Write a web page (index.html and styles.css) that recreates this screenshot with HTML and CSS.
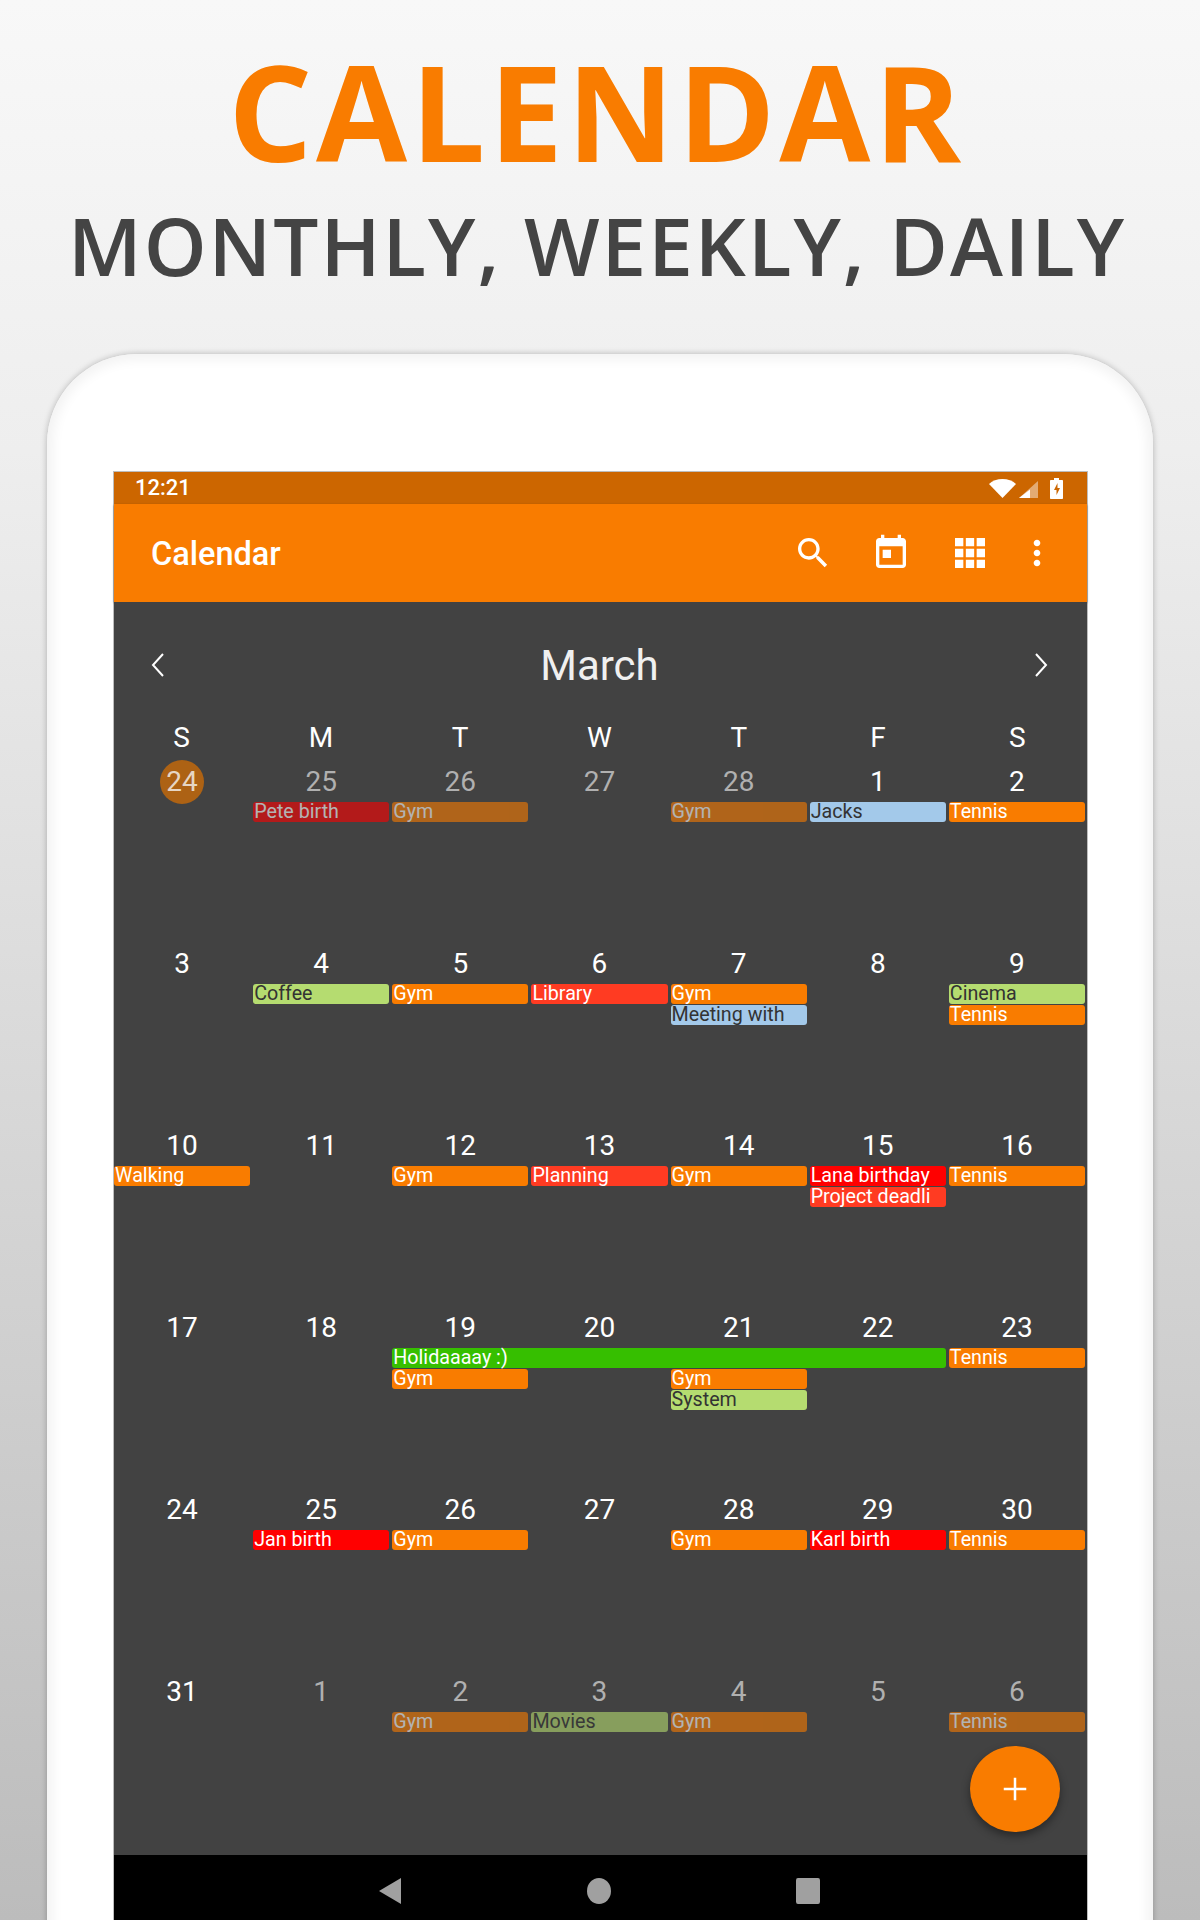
FILE: index.html
```html
<!DOCTYPE html>
<html lang="en">
<head>
    <meta charset="UTF-8">
    <meta name="viewport" content="width=device-width, initial-scale=1.0">
    <title>Calendar</title>
    <link rel="stylesheet" href="styles.css">
</head>
<body>
    <header class="promo">
        <h1>CALENDAR</h1>
        <h2>MONTHLY, WEEKLY, DAILY</h2>
    </header>

    <div class="phone">
        <div class="screen">
            <div class="status-bar">
                <span class="time">12:21</span>
                <div class="status-icons">
                    <svg class="wifi" viewBox="0 0 27 19"><path fill="#fff" d="M13.5 19 0 5C3.5 1.800 8.200 0 13.500 0S23.500 1.800 27 5z"/></svg>
                    <svg class="signal" viewBox="0 0 19 17"><path fill="#fff" fill-opacity=".45" d="M19 0v17H0z"/><path fill="#fff" d="M11 8.500V17H0z"/></svg>
                    <svg class="battery" viewBox="0 0 13 21"><path fill="#fff" d="M4 0h5v2h3c.6 0 1 .4 1 1v17c0 .6-.4 1-1 1H1c-.6 0-1-.4-1-1V3c0-.6.400-1 1-1h3z"/><path fill="#cc6600" d="M7.500 5 4 12h2.500v5L10 10H7.500z"/></svg>
                </div>
            </div>

            <div class="toolbar">
                <span class="app-title">Calendar</span>
                <svg class="tool tool-search" viewBox="0 0 24 24"><path d="M15.500 14h-.79l-.28-.27C15.410 12.590 16 11.110 16 9.500 16 5.910 13.090 3 9.500 3S3 5.910 3 9.500 5.910 16 9.500 16c1.610 0 3.090-.59 4.230-1.570l.27.28v.79l5 4.990L20.490 19l-4.990-5zm-6 0C7.010 14 5 11.990 5 9.500S7.010 5 9.500 5 14 7.010 14 9.500 11.990 14 9.500 14z"/></svg>
                <svg class="tool tool-today" viewBox="0 0 24 24"><path d="M19 3h-1V1h-2v2H8V1H6v2H5c-1.110 0-1.990.9-1.990 2L3 19c0 1.100.89 2 2 2h14c1.100 0 2-.9 2-2V5c0-1.100-.9-2-2-2zm0 16H5V8h14v11zM7 10h5v5H7z"/></svg>
                <svg class="tool tool-grid" viewBox="0 0 24 24"><path d="M3 3h5v5H3zM9.500 3h5v5h-5zM16 3h5v5h-5zM3 9.500h5v5H3zM9.500 9.500h5v5h-5zM16 9.500h5v5h-5zM3 16h5v5H3zM9.500 16h5v5h-5zM16 16h5v5h-5z"/></svg>
                <svg class="tool tool-more" viewBox="0 0 24 24"><path d="M12 8c1.100 0 2-.9 2-2s-.9-2-2-2-2 .9-2 2 .9 2 2 2zm0 2c-1.100 0-2 .9-2 2s.9 2 2 2 2-.9 2-2-.9-2-2-2zm0 6c-1.100 0-2 .9-2 2s.9 2 2 2 2-.9 2-2-.9-2-2-2z"/></svg>
            </div>

            <main class="month">
                <div class="month-nav">
                    <svg class="chevron" viewBox="0 0 16 26"><path d="M13 2 3 13l10 11"/></svg>
                    <span class="month-name">March</span>
                    <svg class="chevron" viewBox="0 0 16 26"><path d="M3 2l10 11L3 24"/></svg>
                </div>

                <div class="weekdays">
                    <span>S</span><span>M</span><span>T</span><span>W</span><span>T</span><span>F</span><span>S</span>
                </div>

                <div class="week">
                    <span class="date c1"><span class="today">24</span></span>
                    <span class="date c2 dim">25</span>
                    <span class="date c3 dim">26</span>
                    <span class="date c4 dim">27</span>
                    <span class="date c5 dim">28</span>
                    <span class="date c6">1</span>
                    <span class="date c7">2</span>
                    <span class="ev c2 r1 red faded">Pete birth</span>
                    <span class="ev c3 r1 orange faded">Gym</span>
                    <span class="ev c5 r1 orange faded">Gym</span>
                    <span class="ev c6 r1 blue">Jacks</span>
                    <span class="ev c7 r1 orange">Tennis</span>
                </div>

                <div class="week">
                    <span class="date c1">3</span>
                    <span class="date c2">4</span>
                    <span class="date c3">5</span>
                    <span class="date c4">6</span>
                    <span class="date c5">7</span>
                    <span class="date c6">8</span>
                    <span class="date c7">9</span>
                    <span class="ev c2 r1 lime">Coffee</span>
                    <span class="ev c3 r1 orange">Gym</span>
                    <span class="ev c4 r1 tomato">Library</span>
                    <span class="ev c5 r1 orange">Gym</span>
                    <span class="ev c5 r2 blue">Meeting with</span>
                    <span class="ev c7 r1 lime">Cinema</span>
                    <span class="ev c7 r2 orange">Tennis</span>
                </div>

                <div class="week">
                    <span class="date c1">10</span>
                    <span class="date c2">11</span>
                    <span class="date c3">12</span>
                    <span class="date c4">13</span>
                    <span class="date c5">14</span>
                    <span class="date c6">15</span>
                    <span class="date c7">16</span>
                    <span class="ev c1 r1 orange">Walking</span>
                    <span class="ev c3 r1 orange">Gym</span>
                    <span class="ev c4 r1 tomato">Planning</span>
                    <span class="ev c5 r1 orange">Gym</span>
                    <span class="ev c6 r1 red">Lana birthday</span>
                    <span class="ev c6 r2 tomato">Project deadli</span>
                    <span class="ev c7 r1 orange">Tennis</span>
                </div>

                <div class="week">
                    <span class="date c1">17</span>
                    <span class="date c2">18</span>
                    <span class="date c3">19</span>
                    <span class="date c4">20</span>
                    <span class="date c5">21</span>
                    <span class="date c6">22</span>
                    <span class="date c7">23</span>
                    <span class="ev c3 span4 r1 green">Holidaaaay :)</span>
                    <span class="ev c7 r1 orange">Tennis</span>
                    <span class="ev c3 r2 orange">Gym</span>
                    <span class="ev c5 r2 orange">Gym</span>
                    <span class="ev c5 r3 lime">System</span>
                </div>

                <div class="week">
                    <span class="date c1">24</span>
                    <span class="date c2">25</span>
                    <span class="date c3">26</span>
                    <span class="date c4">27</span>
                    <span class="date c5">28</span>
                    <span class="date c6">29</span>
                    <span class="date c7">30</span>
                    <span class="ev c2 r1 red">Jan birth</span>
                    <span class="ev c3 r1 orange">Gym</span>
                    <span class="ev c5 r1 orange">Gym</span>
                    <span class="ev c6 r1 red">Karl birth</span>
                    <span class="ev c7 r1 orange">Tennis</span>
                </div>

                <div class="week">
                    <span class="date c1">31</span>
                    <span class="date c2 dim">1</span>
                    <span class="date c3 dim">2</span>
                    <span class="date c4 dim">3</span>
                    <span class="date c5 dim">4</span>
                    <span class="date c6 dim">5</span>
                    <span class="date c7 dim">6</span>
                    <span class="ev c3 r1 orange faded">Gym</span>
                    <span class="ev c4 r1 lime faded">Movies</span>
                    <span class="ev c5 r1 orange faded">Gym</span>
                    <span class="ev c7 r1 orange faded">Tennis</span>
                </div>

                <button class="fab" type="button">
                    <svg viewBox="0 0 24 24"><path d="M11 3h2v8h8v2h-8v8h-2v-8H3v-2h8z"/></svg>
                </button>
            </main>

            <nav class="nav-bar">
                <svg class="nav-icon" viewBox="0 0 24 24" preserveAspectRatio="none"><path d="M23 0v24L1 12z"/></svg>
                <svg class="nav-icon" viewBox="0 0 24 24" preserveAspectRatio="none"><circle cx="12" cy="12" r="12"/></svg>
                <svg class="nav-icon" viewBox="0 0 24 24" preserveAspectRatio="none"><rect x="0" y="0" width="24" height="24" rx="2"/></svg>
            </nav>
        </div>
    </div>
</body>
</html>
```

FILE: styles.css
```css
*{
    margin: 0;
    padding: 0;
    box-sizing: border-box;
}
body{
    width: 1200px;
    height: 1920px;
    overflow: hidden;
    background: linear-gradient(#f8f8f8 0, #eeeeee 450px, #bcbcbc 100%);
    font-family: Roboto, "Liberation Sans", sans-serif;
}

/* promo text */
.promo{
    height: 354px;
    padding-top: 33px;
    text-align: center;
    font-family: "Open Sans", "Liberation Sans", sans-serif;
}
.promo h1{
    color: #f97c00;
    font-size: 132px;
    font-weight: 700;
    letter-spacing: 3.7px;
    line-height: 156px;
    padding-right: 7px;
}
.promo h2{
    color: #444444;
    font-size: 80px;
    font-weight: 600;
    letter-spacing: 2px;
    line-height: 90px;
    margin-top: 11px;
    padding-right: 6px;
}

/* phone */
.phone{
    width: 1106px;
    height: 1640px;
    margin-left: 47px;
    padding: 117px 65px 0 66px;
    background: #ffffff;
    border-radius: 90px 90px 0 0;
    box-shadow: 0 0 6px rgba(0, 0, 0, .25), inset 0 0 12px 6px #f3f3f3;
}
.screen{
    width: 975px;
    border: 1px solid #bdbdbd;
    border-bottom: 0;
}

.status-bar{
    height: 32px;
    background-color: #cc6600;
    color: #ffffff;
    display: flex;
    align-items: center;
    justify-content: space-between;
    padding: 0 24px 0 21px;
}
.time{
    font-size: 22px;
    font-weight: 500;
    margin-top: -2px;
}
.status-icons{
    display: flex;
    align-items: center;
}
.wifi{
    width: 27px;
    height: 19px;
}
.signal{
    width: 19px;
    height: 17px;
    margin-left: 3px;
    margin-top: 2px;
}
.battery{
    width: 13px;
    height: 21px;
    margin-left: 12px;
}

.toolbar{
    height: 98px;
    background-color: #f97c00;
    display: flex;
    align-items: center;
    padding: 0 30px 0 37px;
    box-shadow: 0 1px 2px rgba(0, 0, 0, .5);
    position: relative;
}
.app-title{
    color: #ffffff;
    font-size: 32.5px;
    font-weight: 500;
    margin-right: auto;
    margin-top: 2px;
}
.tool{
    width: 40px;
    height: 40px;
    fill: #ffffff;
}
.tool-today{
    margin-left: 38px;
}
.tool-grid{
    margin-left: 39px;
}
.tool-more{
    margin-left: 27px;
}

/* month */
.month{
    height: 1253px;
    background-color: #424242;
    position: relative;
}
.month-nav{
    height: 98px;
    padding: 30px 38px 0 36px;
    display: flex;
    justify-content: space-between;
}
.month-name{
    color: #f0f0f0;
    font-size: 42px;
    line-height: 68px;
}
.chevron{
    width: 16px;
    height: 26px;
    margin-top: 20px;
    fill: none;
    stroke: #ffffff;
    stroke-width: 2;
}
.weekdays{
    height: 64px;
    margin-left: -2px;
    padding-top: 12px;
    display: grid;
    grid-template-columns: repeat(7, 1fr);
    text-align: center;
    color: #ffffff;
    font-size: 28px;
    line-height: 52px;
}
.week{
    height: 182px;
    margin-left: -1px;
    display: grid;
    grid-template-columns: repeat(7, 1fr);
    grid-template-rows: 38px repeat(3, 21px);
    align-content: start;
}
.date{
    grid-row: 1;
    padding-right: 1px;
    color: #ffffff;
    font-size: 28px;
    line-height: 36px;
    text-align: center;
}
.dim{
    color: #b0b0b0;
}
.today{
    display: block;
    width: 44px;
    height: 44px;
    margin: -4px auto 0;
    line-height: 44px;
    border-radius: 50%;
    background-color: #ad6214;
    color: #e6d6c4;
}

/* events */
.ev{
    height: 20px;
    margin: 0 2px 0 1px;
    padding-left: 1px;
    border-radius: 3px;
    color: #ffffff;
    font-size: 19.7px;
    line-height: 20px;
    white-space: nowrap;
}
.faded{
    opacity: .6;
}
.orange{ background-color: #f97c00; }
.red{ background-color: #ff0000; }
.tomato{ background-color: #ff3b22; }
.green{ background-color: #36bf00; }
.blue{ background-color: #a3c9ea; color: #333333; }
.lime{ background-color: #b5dc70; color: #333333; }

.c1{ grid-column-start: 1; }
.c2{ grid-column-start: 2; }
.c3{ grid-column-start: 3; }
.c4{ grid-column-start: 4; }
.c5{ grid-column-start: 5; }
.c6{ grid-column-start: 6; }
.c7{ grid-column-start: 7; }
.span4{ grid-column-end: span 4; }
.r1{ grid-row: 2; }
.r2{ grid-row: 3; }
.r3{ grid-row: 4; }

.fab{
    position: absolute;
    right: 27px;
    bottom: 23px;
    width: 90px;
    height: 86px;
    border: 0;
    border-radius: 50%;
    background-color: #f97c00;
    box-shadow: 0 4px 8px rgba(0, 0, 0, .4);
    display: flex;
    align-items: center;
    justify-content: center;
}
.fab svg{
    width: 30px;
    height: 30px;
    fill: #ffffff;
}

.nav-bar{
    height: 65px;
    background-color: #000000;
    display: flex;
    justify-content: center;
    gap: 185px;
    padding: 23px 4px 0 0;
}
.nav-icon{
    width: 24px;
    height: 26px;
    fill: #a0a0a0;
}
```
